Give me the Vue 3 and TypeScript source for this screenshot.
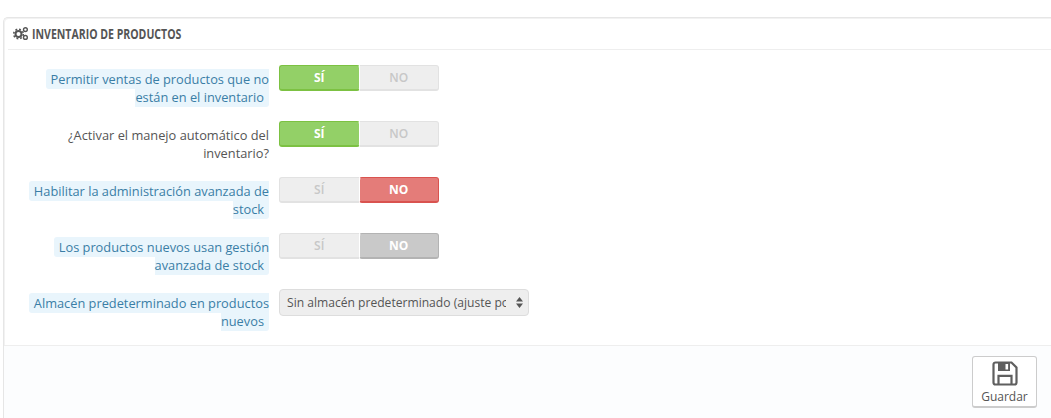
<script setup lang="ts">
defineOptions({ name: 'InventarioPanel' });

interface SwitchRow {
  label: string;
  value: 'si' | 'no';
  tint?: 'red' | 'gray';
  help?: boolean;
}

const rows: SwitchRow[] = [
  { label: 'Permitir ventas de productos que no están en el inventario', value: 'si', help: true },
  { label: '¿Activar el manejo automático del inventario?', value: 'si' },
  { label: 'Habilitar la administración avanzada de stock', value: 'no', tint: 'red', help: true },
  { label: 'Los productos nuevos usan gestión avanzada de stock', value: 'no', tint: 'gray', help: true },
];
</script>

<template>
  <div class="page">
    <section class="panel">
      <header class="panel-head">
        <svg class="cogs" width="15" height="13" viewBox="0 0 15 13" aria-hidden="true">
          <circle cx="5.5" cy="7" r="3" fill="none" stroke="#555" stroke-width="2" />
          <circle cx="5.5" cy="7" r="4.8" fill="none" stroke="#555" stroke-width="1.6" stroke-dasharray="1.9 1.87" />
          <circle cx="12.4" cy="2.6" r="1.9" fill="none" stroke="#555" stroke-width="1.4" />
          <circle cx="12.4" cy="10.4" r="1.9" fill="none" stroke="#555" stroke-width="1.4" />
        </svg>
        <span class="title">INVENTARIO DE PRODUCTOS</span>
      </header>

      <div class="form">
        <div v-for="row in rows" :key="row.label" class="row">
          <div class="label"><span :class="{ help: row.help }">{{ row.label }}</span></div>
          <div class="switch">
            <span class="opt" :class="{ 'on-green': row.value === 'si' }">SÍ</span>
            <span class="opt" :class="row.value === 'no' ? 'on-' + row.tint : ''">NO</span>
          </div>
        </div>
        <div class="row">
          <div class="label"><span class="help">Almacén predeterminado en productos nuevos</span></div>
          <div class="select-wrap">
            <select class="select">
              <option>Sin almacén predeterminado (ajuste por defecto)</option>
            </select>
            <svg class="arrows" width="7" height="11" viewBox="0 0 7 11" aria-hidden="true">
              <path d="M3.5 0 7 4.4H0zM3.5 11 0 6.6h7z" fill="#555" />
            </svg>
          </div>
        </div>
      </div>

      <footer class="panel-foot">
        <button type="button" class="save">
          <svg width="26" height="25" viewBox="0 0 26 25" aria-hidden="true">
            <path d="M3.5 1.5h16l5 5v15a2 2 0 0 1-2 2h-19a2 2 0 0 1-2-2v-18a2 2 0 0 1 2-2z" fill="none" stroke="#5f5f5f" stroke-width="2.2" />
            <path d="M6 1.5h12v8.5H6z" fill="#5f5f5f" />
            <path d="M13.5 3h2.6v5.5h-2.6z" fill="#fff" />
            <path d="M6.5 23v-8.2h13V23" fill="none" stroke="#5f5f5f" stroke-width="2.2" />
          </svg>
          <span>Guardar</span>
        </button>
      </footer>
    </section>
  </div>
</template>

<style>
html, body {
  margin: 0;
  background: #fff;
  overflow: hidden;
}
</style>

<style scoped>
.page {
  padding: 17px 0 0 3px;
  height: 401px;
  font-family: "Open Sans", "Liberation Sans", sans-serif;
  font-size: 12.8px;
  color: #555;
}
.panel {
  border: 1px solid #e6e6e6;
  border-right: 0;
  border-bottom: 0;
  border-top-left-radius: 5px;
  box-shadow: inset 1px 1px 0 #f2f2f2;
  height: 401px;
  box-sizing: border-box;
  display: flex;
  flex-direction: column;
}
.panel-head {
  margin-left: 4px;
  height: 31px;
  border-bottom: 1px solid #eee;
  display: flex;
  align-items: center;
  gap: 4px;
  padding-left: 5px;
}
.title {
  display: inline-block;
  font-size: 14px;
  font-weight: 700;
  color: #555;
  white-space: nowrap;
  transform: scaleX(0.752);
  transform-origin: left center;
}
.cogs {
  flex: none;
}
.form {
  padding: 15px 0 0 0;
  height: 280px;
  display: flex;
  flex-direction: column;
  gap: 30px;
}
.row {
  display: flex;
  align-items: flex-start;
  gap: 10px;
  height: 26px;
}
.label {
  margin-left: 20px;
  width: 245px;
  flex: none;
  padding-top: 5px;
  text-align: right;
  line-height: 18px;
  color: #555;
}
.help {
  color: #3a7ea6;
  background: #e9f5fc;
  padding: 1px 5px;
  border-radius: 3px;
}
.switch {
  width: 160px;
  height: 26px;
  display: flex;
  flex: none;
}
.opt {
  flex: 1;
  display: flex;
  align-items: center;
  justify-content: center;
  box-sizing: border-box;
  background: #eee;
  border: 1px solid #e2e2e2;
  border-bottom-width: 2px;
  color: #c7c7c7;
  font-size: 12px;
  font-weight: 600;
}
.opt:first-child {
  border-radius: 3px 0 0 3px;
  border-right: 0;
}
.opt:last-child {
  border-radius: 0 3px 3px 0;
  border-left: 0;
}
.opt.on-green,
.opt.on-red,
.opt.on-gray {
  color: #fff;
  font-weight: 700;
  border-width: 1px 1px 2px;
  border-style: solid;
  border-radius: 3px;
}
.on-green {
  background: #93d067;
  border-color: #7cc142;
}
.on-red {
  background: #e47c79;
  border-color: #d9534f;
}
.on-gray {
  background: #c9c9c9;
  border-color: #b3b3b3;
}
.select-wrap {
  position: relative;
  width: 250px;
  height: 27px;
  flex: none;
}
.select {
  appearance: none;
  width: 100%;
  height: 100%;
  box-sizing: border-box;
  padding: 0 22px 0 7px;
  border: 1px solid #ddd;
  border-radius: 4px;
  background: #eee;
  color: #555;
  font-family: inherit;
  font-size: 12.1px;
}
.arrows {
  position: absolute;
  right: 6px;
  top: 8px;
}
.panel-foot {
  flex: 1;
  border-top: 1px solid #eee;
  background: #fcfdfe;
  display: flex;
  justify-content: flex-end;
  align-items: flex-start;
  padding: 10px 14px 0 0;
}
.save {
  width: 65px;
  height: 52px;
  box-sizing: border-box;
  padding: 4px 0 0;
  background: #fff;
  border: 1px solid #ccc;
  border-bottom-width: 2px;
  border-radius: 3px;
  color: #555;
  font-family: inherit;
  font-size: 12px;
  line-height: 17px;
  display: flex;
  flex-direction: column;
  align-items: center;
  gap: 2px;
}
</style>
